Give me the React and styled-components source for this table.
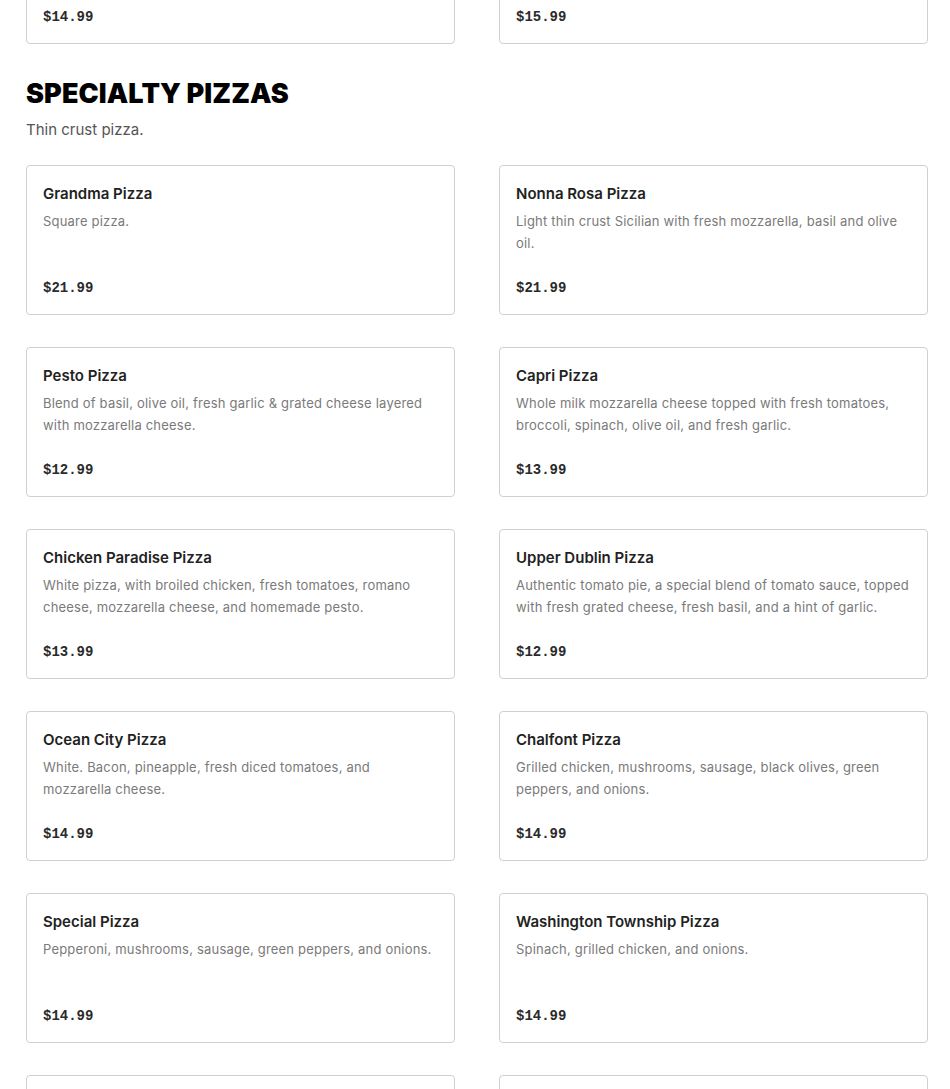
import styled, { createGlobalStyle } from "styled-components";

const GlobalStyle = createGlobalStyle`
  * { box-sizing: border-box; }
  body {
    margin: 0;
    background: #fff;
    font-family: Inter, "Noto Sans", sans-serif;
    color: #222;
  }
`;

const Page = styled.div`
  height: 1089px;
  overflow: hidden;
  padding: 0 22px 0 26px;
`;

const Grid = styled.div`
  display: grid;
  grid-template-columns: 1fr 1fr;
  column-gap: 44px;
  row-gap: 32px;
  margin-top: ${(p) => p.$offset || 0}px;
`;

const Card = styled.div`
  display: flex;
  flex-direction: column;
  min-height: 150px;
  padding: 16px;
  border: 1px solid #d0d0d0;
  border-radius: 4px;
  background: #fff;
`;

const Name = styled.h3`
  margin: 0;
  font-size: 15px;
  line-height: 24px;
  font-weight: 600;
  color: #222;
`;

const Desc = styled.p`
  margin: 4px 0 22px;
  font-size: 13px;
  line-height: 22px;
  letter-spacing: 0.2px;
  color: #7a7a7a;
`;

const Price = styled.div`
  margin-top: auto;
  font-family: "Liberation Mono", monospace;
  font-weight: 700;
  font-size: 14px;
  line-height: 20px;
  color: #2a2a2a;
`;

const Section = styled.section`
  padding: 33px 0 24px;
`;

const Heading = styled.h2`
  margin: 0;
  font-family: Inter, sans-serif;
  font-weight: 900;
  font-size: 27px;
  line-height: 34px;
  letter-spacing: 0.1px;
  text-transform: uppercase;
  color: #000;
`;

const Sub = styled.p`
  margin: 8px 0 0;
  font-size: 15px;
  line-height: 22px;
  color: #555;
`;

const previous = [
  { name: "Pizza", desc: "Cheese pizza.", price: "$14.99" },
  { name: "Pizza", desc: "Cheese pizza.", price: "$15.99" },
];

const pizzas = [
  { name: "Grandma Pizza", desc: "Square pizza.", price: "$21.99" },
  {
    name: "Nonna Rosa Pizza",
    desc: "Light thin crust Sicilian with fresh mozzarella, basil and olive oil.",
    price: "$21.99",
  },
  {
    name: "Pesto Pizza",
    desc: "Blend of basil, olive oil, fresh garlic & grated cheese layered with mozzarella cheese.",
    price: "$12.99",
  },
  {
    name: "Capri Pizza",
    desc: "Whole milk mozzarella cheese topped with fresh tomatoes, broccoli, spinach, olive oil, and fresh garlic.",
    price: "$13.99",
  },
  {
    name: "Chicken Paradise Pizza",
    desc: "White pizza, with broiled chicken, fresh tomatoes, romano cheese, mozzarella cheese, and homemade pesto.",
    price: "$13.99",
  },
  {
    name: "Upper Dublin Pizza",
    desc: "Authentic tomato pie, a special blend of tomato sauce, topped with fresh grated cheese, fresh basil, and a hint of garlic.",
    price: "$12.99",
  },
  {
    name: "Ocean City Pizza",
    desc: "White. Bacon, pineapple, fresh diced tomatoes, and mozzarella cheese.",
    price: "$14.99",
  },
  {
    name: "Chalfont Pizza",
    desc: "Grilled chicken, mushrooms, sausage, black olives, green peppers, and onions.",
    price: "$14.99",
  },
  {
    name: "Special Pizza",
    desc: "Pepperoni, mushrooms, sausage, green peppers, and onions.",
    price: "$14.99",
  },
  {
    name: "Washington Township Pizza",
    desc: "Spinach, grilled chicken, and onions.",
    price: "$14.99",
  },
  { name: "Pizza", desc: "", price: "" },
  { name: "Pizza", desc: "", price: "" },
];

function MenuCard({ item }) {
  return (
    <Card>
      <Name>{item.name}</Name>
      <Desc>{item.desc}</Desc>
      <Price>{item.price}</Price>
    </Card>
  );
}

export default function App() {
  return (
    <>
      <GlobalStyle />
      <Page>
        <Grid $offset={-106}>
          {previous.map((p, i) => (
            <MenuCard key={i} item={p} />
          ))}
        </Grid>
        <Section>
          <Heading>Specialty Pizzas</Heading>
          <Sub>Thin crust pizza.</Sub>
        </Section>
        <Grid>
          {pizzas.map((p, i) => (
            <MenuCard key={i} item={p} />
          ))}
        </Grid>
      </Page>
    </>
  );
}
